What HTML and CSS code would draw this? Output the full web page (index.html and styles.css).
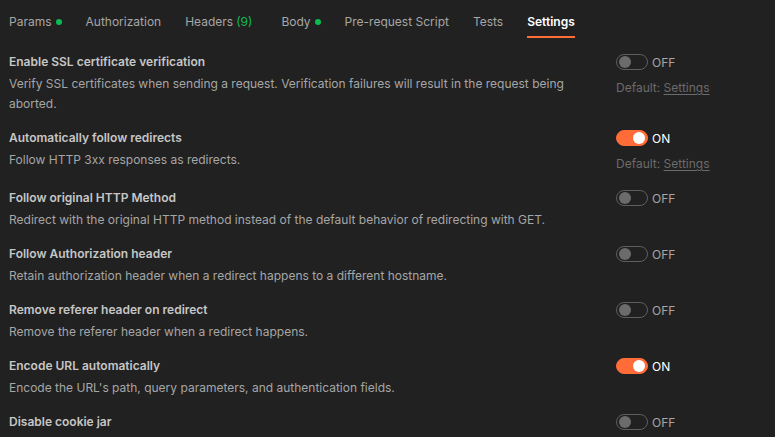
FILE: index.html
```html
<!DOCTYPE html>
<html>
<head>
<meta charset="utf-8">
<link rel="stylesheet" href="styles.css">
</head>
<body>
<nav class="tabs">
  <div class="tab">Params<span class="dot"></span></div>
  <div class="tab">Authorization</div>
  <div class="tab tab-wide">Headers <span class="count">(9)</span></div>
  <div class="tab">Body<span class="dot"></span></div>
  <div class="tab">Pre-request Script</div>
  <div class="tab">Tests</div>
  <div class="tab active">Settings</div>
</nav>
<main class="settings">
  <section class="row">
    <div class="info">
      <div class="title">Enable SSL certificate verification</div>
      <div class="desc">Verify SSL certificates when sending a request. Verification failures will result in the request being aborted.</div>
    </div>
    <div class="control">
      <div class="switch-line"><span class="switch"><span class="knob"></span></span><span class="state">OFF</span></div>
      <div class="default">Default: <span class="link">Settings</span></div>
    </div>
  </section>
  <section class="row">
    <div class="info">
      <div class="title">Automatically follow redirects</div>
      <div class="desc">Follow HTTP 3xx responses as redirects.</div>
    </div>
    <div class="control">
      <div class="switch-line"><span class="switch on"><span class="knob"></span></span><span class="state on">ON</span></div>
      <div class="default">Default: <span class="link">Settings</span></div>
    </div>
  </section>
  <section class="row">
    <div class="info">
      <div class="title">Follow original HTTP Method</div>
      <div class="desc">Redirect with the original HTTP method instead of the default behavior of redirecting with GET.</div>
    </div>
    <div class="control">
      <div class="switch-line"><span class="switch"><span class="knob"></span></span><span class="state">OFF</span></div>
    </div>
  </section>
  <section class="row">
    <div class="info">
      <div class="title">Follow Authorization header</div>
      <div class="desc">Retain authorization header when a redirect happens to a different hostname.</div>
    </div>
    <div class="control">
      <div class="switch-line"><span class="switch"><span class="knob"></span></span><span class="state">OFF</span></div>
    </div>
  </section>
  <section class="row">
    <div class="info">
      <div class="title">Remove referer header on redirect</div>
      <div class="desc">Remove the referer header when a redirect happens.</div>
    </div>
    <div class="control">
      <div class="switch-line"><span class="switch"><span class="knob"></span></span><span class="state">OFF</span></div>
    </div>
  </section>
  <section class="row">
    <div class="info">
      <div class="title">Encode URL automatically</div>
      <div class="desc">Encode the URL's path, query parameters, and authentication fields.</div>
    </div>
    <div class="control">
      <div class="switch-line"><span class="switch on"><span class="knob"></span></span><span class="state on">ON</span></div>
    </div>
  </section>
  <section class="row">
    <div class="info">
      <div class="title">Disable cookie jar</div>
    </div>
    <div class="control">
      <div class="switch-line"><span class="switch"><span class="knob"></span></span><span class="state">OFF</span></div>
    </div>
  </section>
</main>
</body>
</html>
```

FILE: styles.css
```css
html, body {
  margin: 0;
  padding: 0;
  background: #212121;
  height: 100%;
  overflow: hidden;
}
body {
  font-family: Inter, "Liberation Sans", sans-serif;
  font-size: 12px;
  color: #a6a6a6;
  padding: 0 9px;
}
.tabs {
  display: flex;
  align-items: flex-end;
}
.tab {
  display: flex;
  align-items: center;
  line-height: 20px;
  padding: 12px 0 4px;
  border-bottom: 2px solid transparent;
  margin-right: 24px;
  color: #a6a6a6;
  white-space: nowrap;
}
.tab-wide {
  margin-right: 29px;
}
.tab .count {
  color: #0cbb52;
  margin-left: 3px;
}
.dot {
  width: 6px;
  height: 6px;
  border-radius: 50%;
  background: #0cbb52;
  margin-left: 4px;
}
.tab.active {
  color: #ffffff;
  font-weight: 600;
  border-bottom-color: #ff6c37;
}
.settings {
  padding-top: 14px;
}
.row {
  display: grid;
  grid-template-columns: 591px 1fr;
  column-gap: 16px;
  margin-bottom: 14px;
}
.title {
  color: #c6c6c6;
  font-weight: 600;
  line-height: 20px;
}
.desc {
  color: #a6a6a6;
  line-height: 20px;
  margin-top: 2px;
}
.switch-line {
  display: flex;
  align-items: center;
  height: 20px;
}
.switch {
  box-sizing: border-box;
  width: 32px;
  height: 16px;
  border-radius: 8px;
  border: 1px solid #5e5e5e;
  display: flex;
  align-items: center;
  padding: 0 2px;
}
.knob {
  width: 12px;
  height: 12px;
  border-radius: 50%;
  background: #6b6b6b;
}
.switch.on {
  background: #ff6c37;
  border-color: #ff6c37;
  justify-content: flex-end;
}
.switch.on .knob {
  background: #ffffff;
}
.state {
  margin-left: 4px;
  color: #a6a6a6;
}
.state.on {
  color: #ffffff;
}
.default {
  color: #6b6b6b;
  line-height: 20px;
  margin-top: 6px;
}
.link {
  text-decoration: underline;
  text-underline-offset: 2px;
}
```
